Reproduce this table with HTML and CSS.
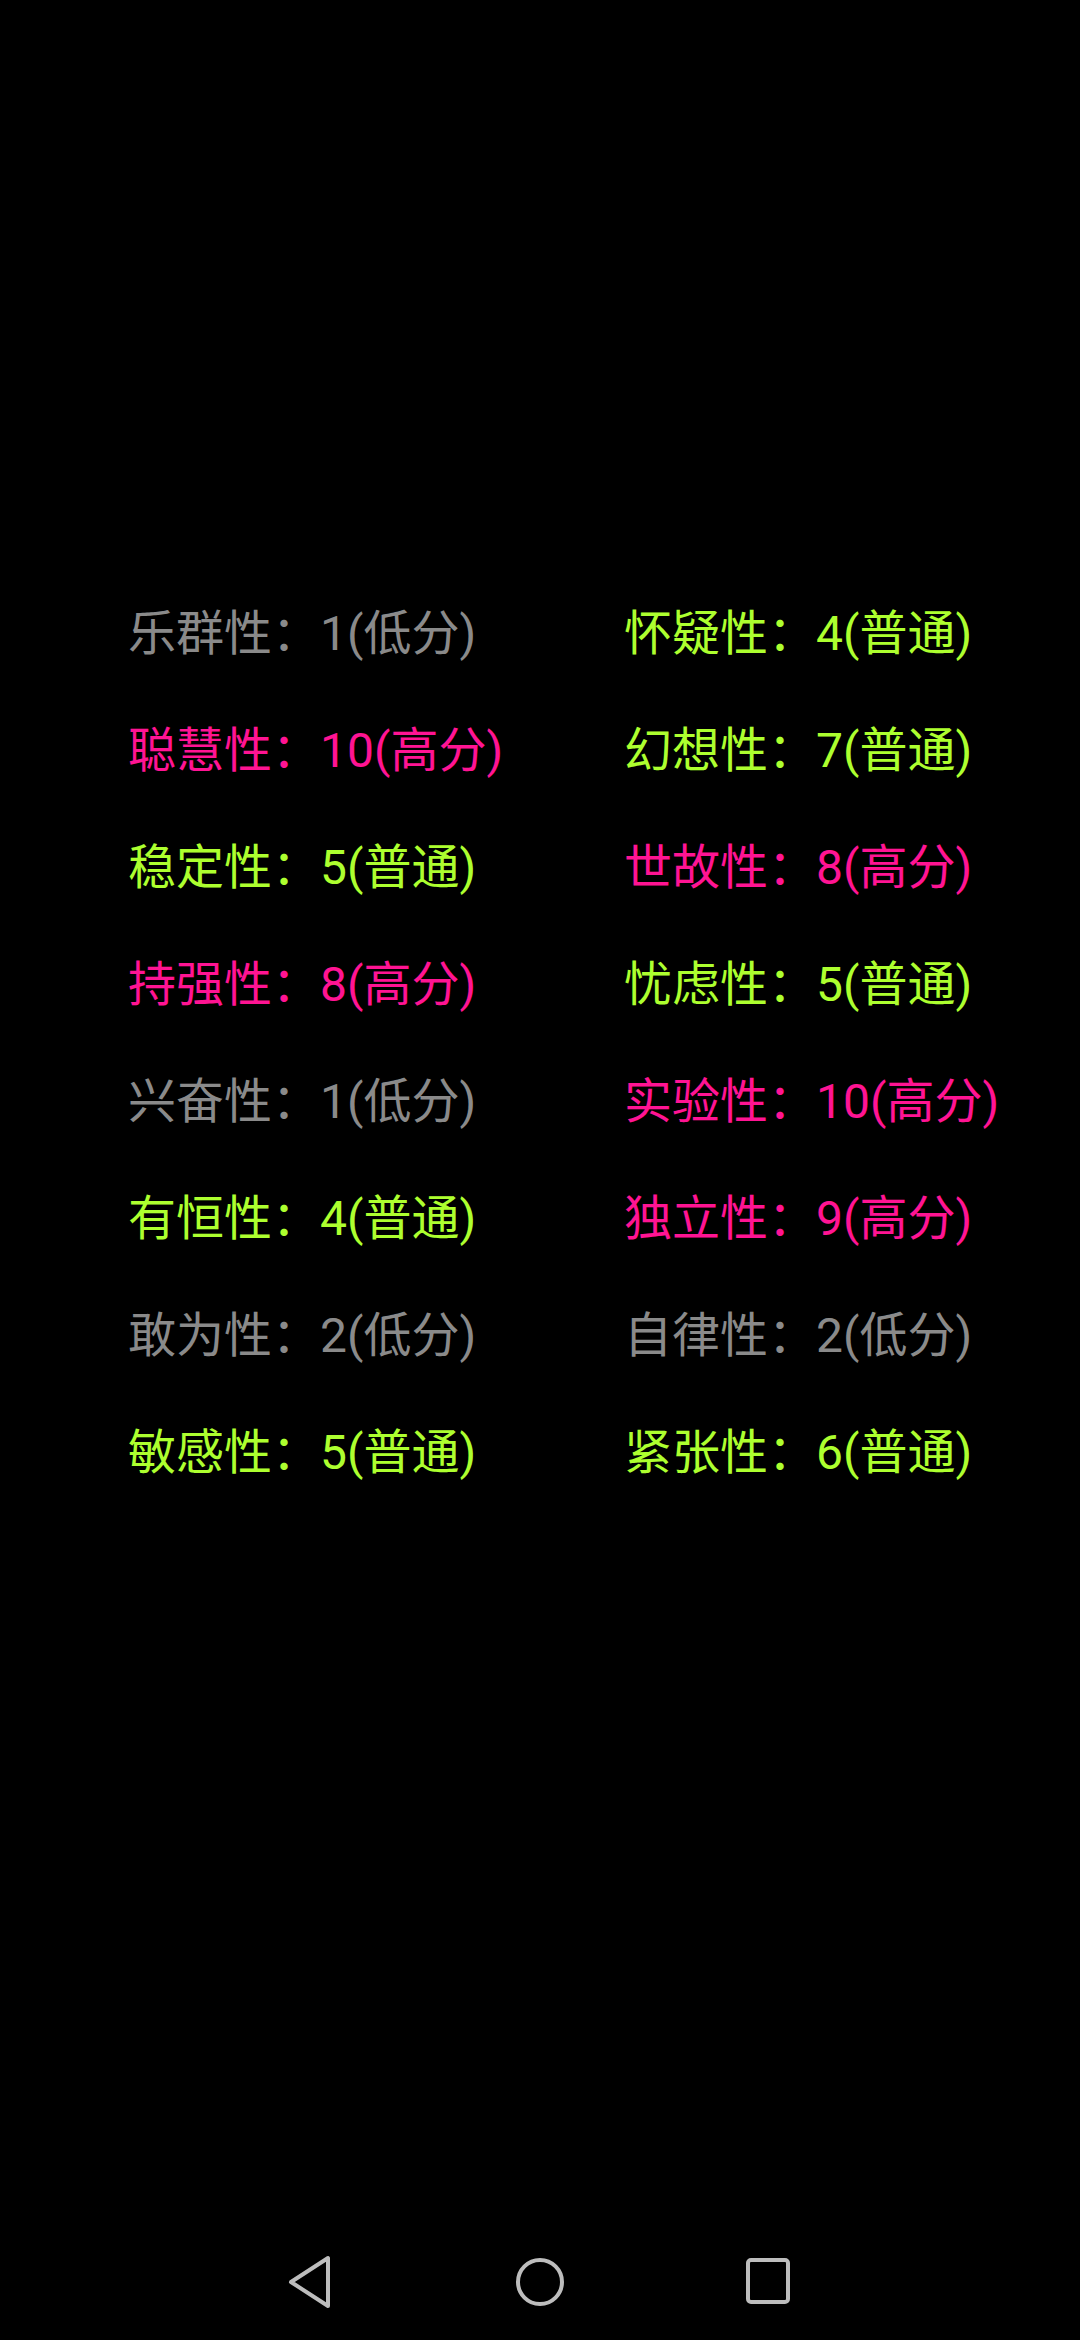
FILE: index.html
```html
<!DOCTYPE html>
<html lang="zh-CN">
<head>
<meta charset="utf-8">
<title>16PF</title>
<link rel="stylesheet" href="styles.css">
</head>
<body>
<div class="screen">
  <main class="content">
    <div class="grid">
      <div class="item low">乐群性：1(低分)</div>
      <div class="item mid">怀疑性：4(普通)</div>
      <div class="item high">聪慧性：10(高分)</div>
      <div class="item mid">幻想性：7(普通)</div>
      <div class="item mid">稳定性：5(普通)</div>
      <div class="item high">世故性：8(高分)</div>
      <div class="item high">持强性：8(高分)</div>
      <div class="item mid">忧虑性：5(普通)</div>
      <div class="item low">兴奋性：1(低分)</div>
      <div class="item high">实验性：10(高分)</div>
      <div class="item mid">有恒性：4(普通)</div>
      <div class="item high">独立性：9(高分)</div>
      <div class="item low">敢为性：2(低分)</div>
      <div class="item low">自律性：2(低分)</div>
      <div class="item mid">敏感性：5(普通)</div>
      <div class="item mid">紧张性：6(普通)</div>
    </div>
  </main>
  <nav class="navbar">
    <div class="nav-btn">
      <svg width="50" height="56" viewBox="0 0 50 56">
        <path d="M42 4 L42 52 L5 28 Z" fill="none" stroke="#bdbdbd" stroke-width="4" stroke-linejoin="round"/>
      </svg>
    </div>
    <div class="nav-btn">
      <svg width="52" height="52" viewBox="0 0 52 52">
        <circle cx="26" cy="26" r="22" fill="none" stroke="#bdbdbd" stroke-width="4"/>
      </svg>
    </div>
    <div class="nav-btn">
      <svg width="50" height="50" viewBox="0 0 50 50">
        <rect x="4" y="3" width="40" height="42" rx="3" fill="none" stroke="#bdbdbd" stroke-width="4"/>
      </svg>
    </div>
  </nav>
</div>
</body>
</html>
```
FILE: styles.css
```css
html, body {
  margin: 0;
  padding: 0;
  background: #000;
}
.screen {
  width: 1080px;
  height: 2340px;
  display: flex;
  flex-direction: column;
  background: #000;
}
.content {
  flex: 1;
  padding-top: 575px;
  padding-left: 128px;
}
.grid {
  display: grid;
  grid-template-columns: 496px 496px;
  grid-auto-rows: 117px;
}
.item {
  font-family: Roboto, "Noto Sans CJK SC", sans-serif;
  font-size: 48px;
  line-height: 117px;
  white-space: nowrap;
}
.low { color: #8a8a8a; }
.mid { color: #adff2f; }
.high { color: #ff1493; }
.navbar {
  height: 116px;
  display: flex;
  align-items: center;
  justify-content: center;
}
.nav-btn {
  width: 229px;
  display: flex;
  justify-content: center;
  align-items: center;
}
```
